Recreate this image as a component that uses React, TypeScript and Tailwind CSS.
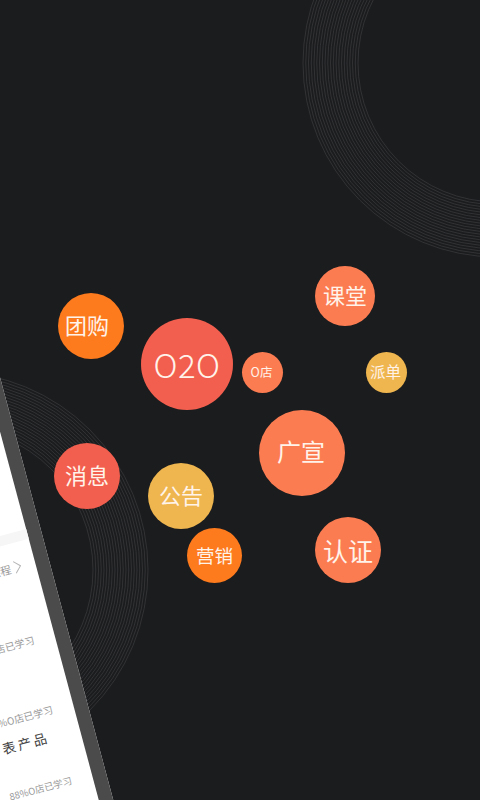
import React from "react";

// bubbles sit on a free canvas, their place is the content
const bubbles = [
    { label: "团购", cls: "left-[58px] top-[293px] w-[66px] h-[66px] bg-[#fd7a1d] text-[22px] pb-[4px] pr-[8px]" },
    { label: "O2O", cls: "left-[141px] top-[318px] w-[92px] h-[92px] bg-[#f35f4e] text-[33px] tracking-[0.5px] font-light" },
    { label: "O店", cls: "left-[242px] top-[352px] w-[41px] h-[41px] bg-[#fc7c52] text-[12.5px] pr-[2px]" },
    { label: "课堂", cls: "left-[315px] top-[266px] w-[60px] h-[60px] bg-[#fc7c52] text-[22px] pb-[4px]" },
    { label: "派单", cls: "left-[366px] top-[352px] w-[41px] h-[41px] bg-[#efb64f] text-[15.5px] pb-[2px] pr-[2px]" },
    { label: "广宣", cls: "left-[259px] top-[410px] w-[86px] h-[86px] bg-[#fc7c52] text-[24px] pb-[4px] pr-[2px]" },
    { label: "认证", cls: "left-[315px] top-[517px] w-[66px] h-[66px] bg-[#fc7c52] text-[25px]" },
    { label: "消息", cls: "left-[54px] top-[443px] w-[66px] h-[66px] bg-[#f35f4e] text-[22px] pb-[4px]" },
    { label: "公告", cls: "left-[148px] top-[463px] w-[66px] h-[66px] bg-[#efb64f] text-[22px] pb-[4px]" },
    { label: "营销", cls: "left-[187px] top-[528px] w-[55px] h-[55px] bg-[#fd7a1d] text-[18.5px]" },
];

const ringOffsets = Array.from({ length: 21 }, (_, i) => i * 2.75);

function Rings({ cx, cy, r }: { cx: number; cy: number; r: number }) {
    return (
        <g fill="none" stroke="#414245" strokeWidth="0.6">
            {ringOffsets.map((o) => (
                <circle key={o} cx={cx} cy={cy} r={r - o} />
            ))}
        </g>
    );
}

export default function App() {
    return (
        <div className="relative w-[480px] h-[800px] overflow-hidden bg-[#1b1c1e] font-['Noto_Sans_CJK_SC','Noto_Sans',sans-serif]">
            <svg className="absolute inset-0" width="480" height="800" viewBox="0 0 480 800" aria-hidden="true">
                <Rings cx={497} cy={63} r={194} />
                <Rings cx={-50} cy={570} r={198} />
            </svg>

            {/* tilted phone coming in from the bottom left */}
            <div className="absolute left-[-410px] top-[340px] w-[400px] h-[640px] origin-top-right -rotate-15 bg-white border-r-[14px] border-[#4b4b4c] flex flex-col items-end">
                <div className="w-full h-[10px] mt-[192px] bg-[#f6f6f6]" />
                <div className="mt-[16px] mr-[14px] flex items-center gap-[3px] text-[11px] leading-[16px] text-[#999999]">
                    <span>全部课程</span>
                    <svg width="8" height="14" viewBox="0 0 8 14" fill="none" stroke="#b5b5b5" strokeWidth="1">
                        <path d="M1 1l6 6-6 6" />
                    </svg>
                </div>
                <p className="mt-[60px] mr-[21px] text-[10px] leading-[14px] text-[#999999]">88%O店已学习</p>
                <p className="mt-[58px] mr-[21px] text-[10px] leading-[14px] text-[#999999]">88%O店已学习</p>
                <p className="mt-[8px] mr-[32px] text-[13.5px] leading-[20px] tracking-[2.5px] text-[#444444]">手表产品</p>
                <p className="mt-[31px] mr-[21px] text-[9.5px] leading-[14px] text-[#999999]">88%O店已学习</p>
            </div>

            {bubbles.map((b) => (
                <div key={b.label} className={`absolute rounded-full flex items-center justify-center text-[#fff3ea] leading-none ${b.cls}`}>
                    {b.label}
                </div>
            ))}
        </div>
    );
}
